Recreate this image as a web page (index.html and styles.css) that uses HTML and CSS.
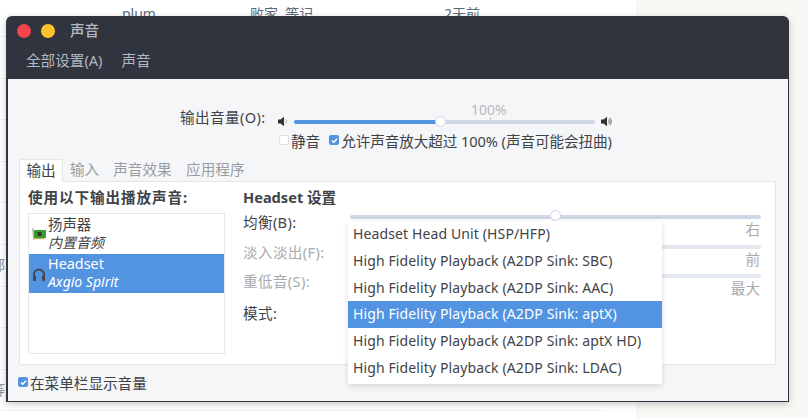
FILE: index.html
```
<!DOCTYPE html>
<html lang="zh">
<head>
<meta charset="utf-8">
<title>声音</title>
<link rel="stylesheet" href="styles.css">
</head>
<body>
<div class="desktop">
  <div class="backdrop">
    <div class="bg-row"><span class="bg-a">plum</span><span class="bg-b">败家&nbsp;&nbsp;等记</span><span class="bg-c">2天前</span></div>
    <div class="bg-row"></div>
    <div class="bg-row"></div>
    <div class="bg-row"></div>
    <div class="bg-row"></div>
    <div class="bg-row"></div>
    <div class="bg-row"><span class="bg-edge">部</span></div>
    <div class="bg-row"></div>
    <div class="bg-row"></div>
    <div class="bg-row"><span class="bg-edge">等</span></div>
  </div>
  <div class="window">
    <header class="titlebar">
      <div class="title-row">
        <span class="dot dot-close"></span>
        <span class="dot dot-min"></span>
        <span class="title">声音</span>
      </div>
      <nav class="menu-row"><span>全部设置(A)</span><span>声音</span></nav>
    </header>
    <main class="content">
      <section class="volume">
        <div class="volume-row">
          <span class="volume-label">输出音量(O):</span>
          <svg class="spk" width="11" height="11" viewBox="0 0 11 11"><path d="M0 3.5h2.5L6 .8v9.4L2.5 7.5H0z" fill="#333"/><path d="M7.5 3.5a2.5 2.5 0 0 1 0 4" fill="none" stroke="#aaa" stroke-width="1"/></svg>
          <div class="vol-slider">
            <span class="vol-pct">100%</span>
            <span class="vol-tick"></span>
            <span class="vol-fill"></span>
            <span class="knob vol-knob"></span>
          </div>
          <svg class="spk" width="11" height="11" viewBox="0 0 11 11"><path d="M0 3.5h2.5L6 .8v9.4L2.5 7.5H0z" fill="#333"/><path d="M7.2 3.5a2.5 2.5 0 0 1 0 4M8.6 2a4.6 4.6 0 0 1 0 7" fill="none" stroke="#555" stroke-width="1"/></svg>
        </div>
        <div class="check-row">
          <span class="check off"></span><span class="check-text mute">静音</span>
          <span class="check on"><svg width="9" height="9" viewBox="0 0 9 9"><path d="M2 4.6l1.8 1.7L7 2.8" fill="none" stroke="#fff" stroke-width="1.5"/></svg></span><span class="check-text allow">允许声音放大超过 100% (声音可能会扭曲)</span>
        </div>
      </section>

      <div class="tabs">
        <span class="tab active">输出</span>
        <span class="tab t2">输入</span>
        <span class="tab t3">声音效果</span>
        <span class="tab t4">应用程序</span>
      </div>
      <section class="panel">
        <div class="left">
          <h2 class="heading">使用以下输出播放声音:</h2>
          <ul class="devices">
            <li class="device">
              <svg class="dev-icon card" width="16" height="14" viewBox="0 0 16 14"><path d="M1 1l2 1v11H2z" fill="#b9bdb4"/><rect x="3" y="3" width="12" height="8" fill="#3c9a35"/><rect x="6.5" y="5" width="4" height="4" fill="#2b3b2a"/><rect x="3" y="11" width="10" height="1.2" fill="#c7b34a"/></svg>
              <div class="dev-text"><span>扬声器</span><em>内置音频</em></div>
            </li>
            <li class="device selected">
              <svg class="dev-icon" width="16" height="16" viewBox="0 0 16 16"><path d="M3 12V7.5a5 5 0 0 1 10 0V12" fill="none" stroke="#45484c" stroke-width="2"/><rect x="2" y="8.5" width="3" height="5.5" rx="1" fill="#45484c"/><rect x="11" y="8.5" width="3" height="5.5" rx="1" fill="#45484c"/></svg>
              <div class="dev-text"><span>Headset</span><em>Axgio Spirit</em></div>
            </li>
          </ul>
        </div>
        <div class="right">
          <h2 class="heading">Headset 设置</h2>
          <div class="setting s1">
            <span class="set-label">均衡(B):</span>
            <div class="track-wrap"><span class="track"></span><span class="knob bal-knob"></span><span class="track-end">右</span></div>
          </div>
          <div class="setting s2 dim">
            <span class="set-label">淡入淡出(F):</span>
            <div class="track-wrap"><span class="track"></span><span class="track-end">前</span></div>
          </div>
          <div class="setting s3 dim">
            <span class="set-label">重低音(S):</span>
            <div class="track-wrap"><span class="track"></span><span class="track-end">最大</span></div>
          </div>
          <div class="setting s4"><span class="set-label">模式:</span></div>
        </div>
      </section>
      <div class="footer-check">
        <span class="check on"><svg width="9" height="9" viewBox="0 0 9 9"><path d="M2 4.6l1.8 1.7L7 2.8" fill="none" stroke="#fff" stroke-width="1.5"/></svg></span><span class="check-text">在菜单栏显示音量</span>
      </div>
    </main>
    <ul class="popup">
      <li>Headset Head Unit (HSP/HFP)</li>
      <li>High Fidelity Playback (A2DP Sink: SBC)</li>
      <li>High Fidelity Playback (A2DP Sink: AAC)</li>
      <li class="current">High Fidelity Playback (A2DP Sink: aptX)</li>
      <li>High Fidelity Playback (A2DP Sink: aptX HD)</li>
      <li>High Fidelity Playback (A2DP Sink: LDAC)</li>
    </ul>
  </div>
</div>
</body>
</html>
```

FILE: styles.css
```
* { box-sizing: border-box; margin: 0; padding: 0; }
html, body { width: 808px; height: 418px; overflow: hidden; }
body {
  font-family: "Noto Sans", "Noto Sans CJK SC", sans-serif;
  font-size: 14.6px;
  color: #3f4347;
}
ul { list-style: none; }
.desktop { position: relative; width: 808px; height: 418px; background: #f7f7f3; }
.backdrop { width: 636px; height: 418px; background: #fff; overflow: hidden; }
.bg-row { position: relative; height: 41.6px; width: 606px; border-bottom: 1px solid #f0f0f0; color: #5b6a78; font-size: 14px; }
.bg-row:first-child { height: 37px; }
.bg-row span { position: absolute; top: 4px; line-height: 20px; }
.bg-a { left: 122px; }
.bg-b { left: 250px; }
.bg-c { left: 444px; }
.bg-row .bg-edge { left: -9px; top: 10px; color: #8a929a; }

.window {
  position: absolute; left: 6px; top: 16px; width: 783px; height: 386px;
  display: flex; flex-direction: column;
  border-radius: 6px 6px 0 0;
  background: #2f343f;
  box-shadow: 0 2px 7px rgba(0,0,0,.22);
}
.titlebar { height: 63px; flex: none; color: #b4b8c0; }
.title-row { display: flex; align-items: center; height: 29px; padding: 0 0 0 11px; }
.dot { width: 14px; height: 14px; border-radius: 50%; margin-right: 10px; }
.dot-close { background: #f4444e; }
.dot-min { background: #fdc12b; }
.title { margin-left: 5px; margin-top: -2px; font-weight: 500; font-family: "Noto Sans CJK SC", sans-serif; }
.menu-row { display: flex; gap: 19px; padding: 3px 0 0 20px; line-height: 24px; }

.content {
  flex: 1; min-height: 0;
  margin: 0 1px 1px 1px;
  background: #f5f6f8;
  display: flex; flex-direction: column;
  border-left: 1px solid #2f343f;
  padding-left: 11px;
  padding-right: 12px;
}
.volume { height: 78px; position: relative; }
.volume-row { display: flex; align-items: center; height: 20px; margin-top: 27px; padding-left: 161px; }
.volume-label { width: 98px; white-space: nowrap; letter-spacing: .4px; }
.spk { flex: none; margin-top: 10px; }
.vol-slider { position: relative; width: 301px; height: 4px; margin: 12px 6px 0 5px; background: #cfd6e6; border-radius: 2px; }
.vol-fill { position: absolute; left: 0; top: 0; height: 4px; width: 146px; background: #5294e2; border-radius: 2px; }
.knob { position: absolute; width: 11px; height: 11px; border-radius: 50%; background: #fff; border: 1px solid #cfd6e6; }
.vol-knob { left: 141px; top: -4px; }
.vol-pct { position: absolute; left: 177px; top: -20px; line-height: 20px; font-size: 14px; color: #b8b9bb; }
.vol-tick { position: absolute; left: 196px; top: -3px; width: 1px; height: 3px; background: #c4c6c9; }
.check-row { display: flex; align-items: center; height: 20px; margin-top: 4px; padding-left: 260px; }
.check { width: 10px; height: 10px; flex: none; border-radius: 2px; display: inline-flex; align-items: center; justify-content: center; margin-right: 2px; }
.check.off { background: #fff; border: 1px solid #dcdfe3; }
.check.on { background: #5294e2; }
.check svg { display: block; }
.check-text { white-space: nowrap; }
.allow { letter-spacing: -.08px; }
.mute { margin-right: 9px; }

.tabs { display: flex; height: 24px; flex: none; align-items: flex-end; color: #9a9da1; }
.tab { height: 22px; line-height: 21px; }
.tab.active { width: 44px; text-align: center; background: #fff; color: #3f4347; border: 1px solid #e4e6ea; border-bottom: 0; margin-bottom: -1px; position: relative; height: 23px; z-index: 1; }
.t2 { margin-left: 7px; }
.t3 { margin-left: 14px; }
.t4 { margin-left: 14.5px; }

.panel { flex: none; height: 184px; display: flex; background: #fff; border: 1px solid #e4e6ea; width: 757px; }
.left { width: 214px; padding: 5px 0 0 8px; flex: none; }
.heading { font-size: 14.6px; font-weight: 700; line-height: 20px; color: #3f4347; white-space: nowrap; }
.left .heading { letter-spacing: .9px; }
.devices { margin-top: 6px; width: 197px; height: 141px; background: #fff; border: 1px solid #e6e8eb; }
.device { display: flex; align-items: center; height: 39.5px; padding-left: 2px; font-size: 14px; }
.device.selected { background: #5294e2; color: #fff; }
.dev-icon { flex: none; margin-top: 4px; margin-right: 1px; }
.dev-icon.card { margin-top: 0; }
.dev-text { display: flex; flex-direction: column; line-height: 18px; }
.dev-text em { font-style: italic; }
.dev-text span { font-size: 14.4px; }
.right { flex: 1; padding: 5px 14px 0 9px; }
.setting { display: flex; position: relative; }
.set-label { width: 107px; flex: none; line-height: 20px; white-space: nowrap; letter-spacing: .35px; }
.s1 { margin-top: 5px; height: 30px; }
.s2 { height: 29px; }
.s3 { height: 32px; }
.dim { color: #a8abae; }
.track-wrap { position: relative; flex: 1; height: 30px; }
.track { position: absolute; left: 0; right: 0; top: 3px; height: 4px; border-radius: 2px; background: #cfd6e6; }
.dim .track { background: #e4e8f0; }
.bal-knob { left: 200px; top: -2px; }
.track-end { position: absolute; right: 1px; top: 7px; line-height: 20px; color: #a8abae; }
.footer-check { display: flex; align-items: center; height: 20px; margin-top: 7px; margin-left: -1px; }

.popup {
  position: absolute; left: 342px; top: 205px; width: 314px; height: 163px;
  background: #fff; box-shadow: 0 2px 6px rgba(0,0,0,.14); font-size: 14px;
}
.popup li { height: 26.8px; line-height: 26.8px; padding-left: 5px; white-space: nowrap; color: #3f4347; letter-spacing: .12px; }
.popup li.current { background: #5294e2; color: #fff; }
```
